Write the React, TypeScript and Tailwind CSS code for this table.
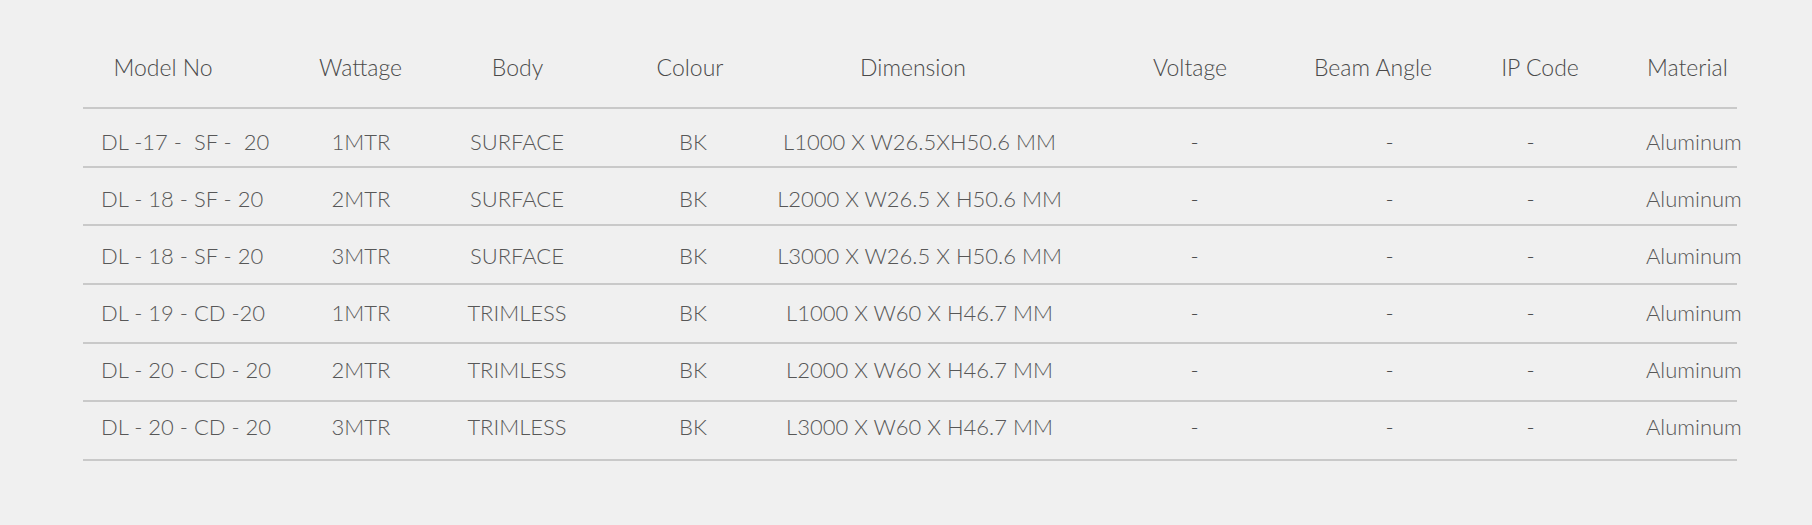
const rows = [
  ["DL -17 -  SF -  20", "1MTR", "SURFACE", "BK", "L1000 X W26.5XH50.6 MM"],
  ["DL - 18 - SF - 20", "2MTR", "SURFACE", "BK", "L2000 X W26.5 X H50.6 MM"],
  ["DL - 18 - SF - 20", "3MTR", "SURFACE", "BK", "L3000 X W26.5 X H50.6 MM"],
  ["DL - 19 - CD -20", "1MTR", "TRIMLESS", "BK", "L1000 X W60 X H46.7 MM"],
  ["DL - 20 - CD - 20", "2MTR", "TRIMLESS", "BK", "L2000 X W60 X H46.7 MM"],
  ["DL - 20 - CD - 20", "3MTR", "TRIMLESS", "BK", "L3000 X W60 X H46.7 MM"],
];

// text in the source sits a little higher in each successive row
const rowPad = ["pt-[8px]", "pt-[5px]", "pt-[1px]", "pb-[2px]", "pb-[5px]", "pb-[8px]"];

const grid =
  "grid grid-cols-[179px_177px_165px_199px_251px_230px_174px_162px_117px]";

export default function App() {
  return (
    <div
      className="w-full h-[525px] bg-[#f0f0f0] pl-[83px] pr-[75px] font-light"
      style={{ fontFamily: "Lato, 'Open Sans', sans-serif" }}
    >
      {/* header */}
      <div
        className={`${grid} h-[109px] pt-[27px] border-b-2 border-[#c9c9c9] text-[23px] text-[#4a4a4a] whitespace-nowrap`}
      >
        <div className="flex items-center justify-center pr-[19px]">Model No</div>
        <div className="flex items-center justify-center pl-[20px]">Wattage</div>
        <div className="flex items-center justify-center pr-[8px]">Body</div>
        <div className="flex items-center justify-center pr-[27px]">Colour</div>
        <div className="flex items-center justify-center pr-[31px]">Dimension</div>
        <div className="flex items-center justify-center pl-[42px]">Voltage</div>
        <div className="flex items-center justify-center pl-[4px]">Beam Angle</div>
        <div className="flex items-center justify-center pl-[2px]">IP Code</div>
        <div className="flex items-center pl-[27px]">Material</div>
      </div>

      {rows.map((r, i) => (
        <div
          key={i}
          className={`${grid} ${rowPad[i]} h-[58.7px] border-b-2 border-[#c9c9c9] text-[22px] text-[#575757] whitespace-pre`}
        >
          <div className="flex items-center pl-[18px]">{r[0]}</div>
          <div className="flex items-center justify-center pl-[21px]">{r[1]}</div>
          <div className="flex items-center justify-center pr-[9px]">{r[2]}</div>
          <div className="flex items-center justify-center pr-[21px]">{r[3]}</div>
          <div className="flex items-center justify-center pr-[18px]">{r[4]}</div>
          <div className="flex items-center justify-center pl-[51px] text-[#444]">-</div>
          <div className="flex items-center justify-center pl-[37px] text-[#444]">-</div>
          <div className="flex items-center justify-center pr-[17px] text-[#444]">-</div>
          <div className="flex items-center pl-[26px]">Aluminum</div>
        </div>
      ))}
    </div>
  );
}
